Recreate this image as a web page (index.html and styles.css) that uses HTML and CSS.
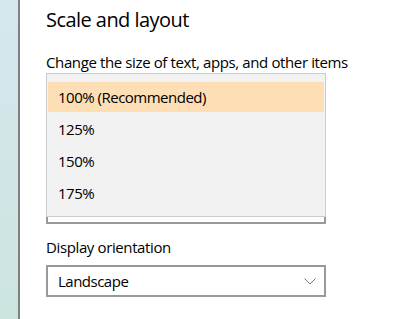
FILE: index.html
```html
<!DOCTYPE html>
<html lang="en">
<head>
  <meta charset="UTF-8" />
  <meta name="viewport" content="width=device-width, initial-scale=1.0" />
  <title>Display settings</title>
  <link rel="stylesheet" href="styles.css">
</head>
<body>
  <div class="window">
    <div class="sidebar"></div>
    <div class="content">
      <h2 class="title">Scale and layout</h2>
      <div class="label">Change the size of text, apps, and other items</div>
      <div class="scale-select">
        <div class="combo combo-hidden"></div>
        <ul class="popup">
          <li class="item selected">100% (Recommended)</li>
          <li class="item">125%</li>
          <li class="item">150%</li>
          <li class="item">175%</li>
        </ul>
      </div>
      <div class="label orientation-label">Display orientation</div>
      <div class="combo">
        <span>Landscape</span>
        <svg class="chevron" width="12" height="7" viewBox="0 0 12 7">
          <path d="M0.5 0.5 L6 6 L11.5 0.5" fill="none" stroke="#777" stroke-width="1" />
        </svg>
      </div>
    </div>
  </div>
</body>
</html>
```

FILE: styles.css
```css
body {
  margin: 0;
  font-family: "Open Sans", sans-serif;
  background-color: #fff;
  color: #000;
}
.window {
  display: flex;
  height: 319px;
}
.sidebar {
  width: 18px;
  background: linear-gradient(#d6e7ee, #cce4e0);
  border-right: 2px solid #808080;
}
.content {
  padding-left: 26px;
  width: 280px;
}
.title {
  margin: 0;
  padding-top: 6px;
  font-size: 20px;
  font-weight: normal;
  line-height: 28px;
  letter-spacing: -0.55px;
}
.label {
  margin-top: 18px;
  font-size: 15px;
  line-height: 20px;
  letter-spacing: -0.38px;
  white-space: nowrap;
}
.scale-select {
  position: relative;
  margin-top: 1px;
  height: 151px;
  display: flex;
  flex-direction: column;
  justify-content: flex-end;
}
.combo {
  box-sizing: border-box;
  height: 32px;
  border: 2px solid #999;
  padding: 0 8px 0 10px;
  display: flex;
  align-items: center;
  justify-content: space-between;
  font-size: 15px;
  line-height: 28px;
  letter-spacing: -0.5px;
}
.popup {
  position: absolute;
  top: 0;
  left: 0;
  right: 0;
  margin: 0;
  padding: 8px 1px;
  list-style: none;
  background-color: #f2f2f2;
  border: 1px solid #ccc;
  display: flex;
  flex-direction: column;
  gap: 2px;
}
.item {
  height: 30px;
  line-height: 30px;
  padding-left: 10px;
  font-size: 15px;
  letter-spacing: -0.5px;
}
.item.selected {
  background-color: #fedfb5;
}
.orientation-label {
  margin-top: 13px;
}
.orientation-label + .combo {
  margin-top: 8px;
}
```
